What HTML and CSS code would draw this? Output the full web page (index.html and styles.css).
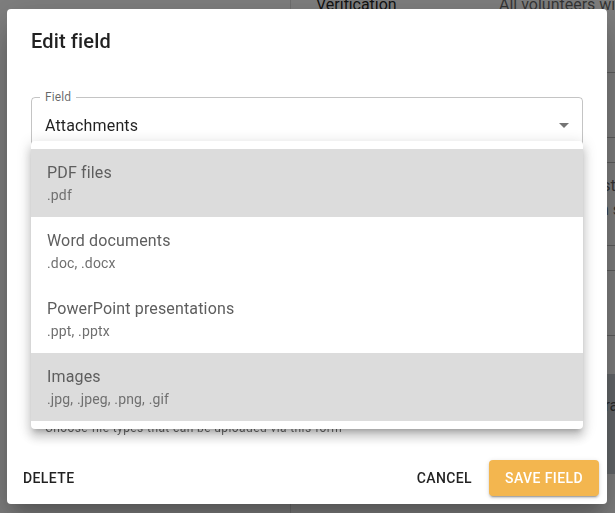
FILE: index.html
```html
<!DOCTYPE html>
<html>
<head>
<meta charset="utf-8">
<link rel="stylesheet" href="styles.css">
</head>
<body>
<div class="page">
  <aside class="sidebar"></aside>
  <main class="main">
    <div class="row r1"><span class="k">Verification</span><span class="v">All volunteers will be verified</span></div>
    <div class="row r2"></div>
    <div class="row r3"></div>
    <div class="row r4"><span class="k">Terms</span><span class="v">Volunteers must accept the terms and conditions th<br>before they can start a</span></div>
    <div class="row r5"></div>
    <div class="row r6"></div>
    <div class="gap"></div>
    <div class="block"><span class="k">Status</span><span class="v">Open for registration and waiting for approval at</span></div>
  </main>
</div>
<div class="backdrop"></div>
<div class="dialog">
  <h2 class="title">Edit field</h2>
  <div class="content">
    <div class="outlined">
      <span class="label">Field</span>
      <span class="value">Attachments</span>
      <svg class="arrow" viewBox="0 0 24 24" width="24" height="24"><path d="M7 10l5 5 5-5z" fill="rgba(0,0,0,0.54)"/></svg>
    </div>
    <div class="hidden-field"></div>
    <p class="helper">Choose file types that can be uploaded via this form</p>
  </div>
  <div class="actions">
    <button class="btn text">Delete</button>
    <div class="right">
      <button class="btn text">Cancel</button>
      <button class="btn contained">Save field</button>
    </div>
  </div>
</div>
<ul class="menu">
  <li class="item selected"><span class="primary">PDF files</span><span class="secondary">.pdf</span></li>
  <li class="item"><span class="primary">Word documents</span><span class="secondary">.doc, .docx</span></li>
  <li class="item"><span class="primary">PowerPoint presentations</span><span class="secondary">.ppt, .pptx</span></li>
  <li class="item selected"><span class="primary">Images</span><span class="secondary">.jpg, .jpeg, .png, .gif</span></li>
</ul>
</body>
</html>
```
FILE: styles.css
```css
* { box-sizing: border-box; }
html, body { margin: 0; padding: 0; height: 100%; }
body {
  font-family: Roboto, "Liberation Sans", sans-serif;
  background: #fff;
  overflow: hidden;
}
.page {
  display: flex;
  height: 100%;
}
.sidebar {
  width: 291px;
  flex-shrink: 0;
  border-right: 1px solid #e0e0e0;
  background: #fff;
}
.main {
  flex: 1;
  min-width: 0;
  overflow: hidden;
  margin-top: -7px;
}
.row {
  display: flex;
  border-bottom: 1px solid #bdbdbd;
}
.k {
  width: 183px;
  padding-left: 25px;
  box-sizing: content-box;
  font-size: 16px;
  line-height: 24px;
  color: rgba(0,0,0,0.87);
  flex-shrink: 0;
}
.v {
  font-size: 16px;
  line-height: 24px;
  color: rgba(0,0,0,0.6);
  white-space: nowrap;
}
.r1 { height: 80px; }
.r2 { height: 65px; }
.r3 { height: 25px; }
.r4 { height: 83px; padding-top: 11px; }
.r5 { height: 25px; }
.r6 { height: 65px; }
.gap { height: 38px; }
.block {
  display: flex;
  height: 100px;
  background: #c9cfd5;
  padding-top: 20px;
}
.backdrop {
  position: fixed;
  inset: 0;
  background: rgba(0,0,0,0.5);
}
.dialog {
  position: fixed;
  left: 7px;
  top: 9px;
  width: 600px;
  height: 495px;
  background: #fff;
  border-radius: 4px;
  box-shadow: 0px 11px 15px -7px rgba(0,0,0,0.2), 0px 24px 38px 3px rgba(0,0,0,0.14), 0px 9px 46px 8px rgba(0,0,0,0.12);
  display: flex;
  flex-direction: column;
}
.title {
  margin: 0;
  padding: 16px 24px;
  font-size: 20px;
  line-height: 32px;
  font-weight: 500;
  letter-spacing: 0.0075em;
  color: rgba(0,0,0,0.87);
}
.content {
  flex: 1;
  padding: 24px 24px 0;
}
.outlined {
  position: relative;
  height: 56px;
  border: 1px solid rgba(0,0,0,0.23);
  border-radius: 4px;
  display: flex;
  align-items: center;
  padding: 0 13px;
}
.label {
  position: absolute;
  left: 8px;
  top: -8px;
  padding: 0 5px;
  background: #fff;
  font-size: 12px;
  line-height: 15px;
  color: rgba(0,0,0,0.6);
  letter-spacing: 0.00938em;
}
.value {
  flex: 1;
  font-size: 16px;
  line-height: 23px;
  color: rgba(0,0,0,0.87);
  letter-spacing: 0.00938em;
}
.arrow {
  margin-right: -7px;
  display: block;
}
.hidden-field {
  height: 265px;
}
.helper {
  margin: 0;
  padding-left: 14px;
  font-size: 12px;
  line-height: 20px;
  color: rgba(0,0,0,0.6);
  letter-spacing: 0.03333em;
}
.actions {
  display: flex;
  justify-content: space-between;
  align-items: center;
  padding: 8px;
}
.right {
  display: flex;
  gap: 9px;
}
.btn {
  font-family: Roboto, "Liberation Sans", sans-serif;
  font-size: 14px;
  font-weight: 500;
  line-height: 24.5px;
  letter-spacing: 0.02857em;
  text-transform: uppercase;
  border: 0;
  border-radius: 4px;
  background: transparent;
  cursor: pointer;
}
.btn.text {
  padding: 6px 8px;
  color: rgba(0,0,0,0.87);
}
.btn.contained {
  padding: 6px 16px;
  background: #f3b64f;
  color: #fff;
  box-shadow: 0px 3px 1px -2px rgba(0,0,0,0.2), 0px 2px 2px 0px rgba(0,0,0,0.14), 0px 1px 5px 0px rgba(0,0,0,0.12);
}
.menu {
  position: fixed;
  left: 31px;
  top: 141px;
  width: 552px;
  margin: 0;
  padding: 8px 0;
  list-style: none;
  background: #fff;
  border-radius: 4px;
  box-shadow: 0px 5px 5px -3px rgba(0,0,0,0.2), 0px 8px 10px 1px rgba(0,0,0,0.14), 0px 3px 14px 2px rgba(0,0,0,0.12);
}
.item {
  height: 68px;
  padding: 12px 16px;
  display: flex;
  flex-direction: column;
}
.item.selected {
  background: #dcdcdc;
}
.primary {
  font-size: 16px;
  line-height: 24px;
  color: #5e5e5e;
  letter-spacing: 0.00938em;
}
.secondary {
  font-size: 14px;
  line-height: 20px;
  color: #707070;
  letter-spacing: 0.01071em;
}
```
